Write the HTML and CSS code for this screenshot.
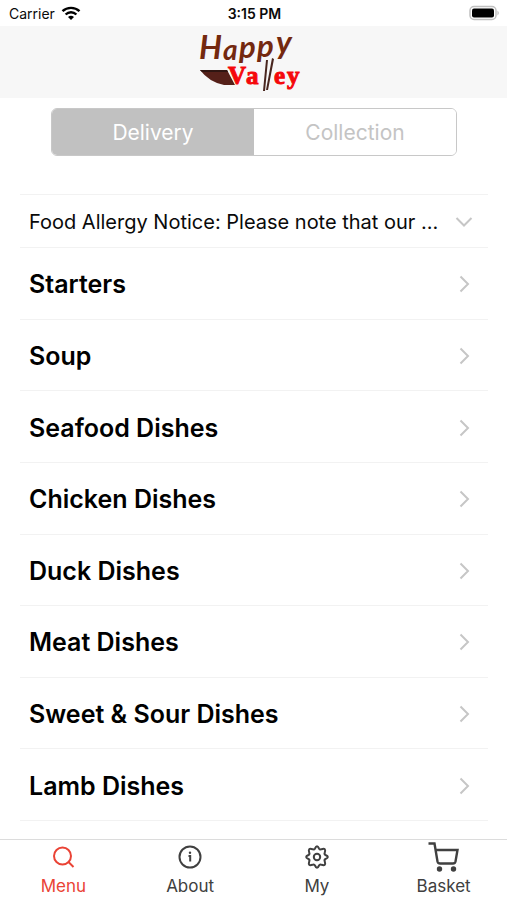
FILE: index.html
```html
<!DOCTYPE html>
<html lang="en">
<head>
<meta charset="utf-8">
<meta name="viewport" content="width=device-width, initial-scale=1">
<title>Happy Valley</title>
<link rel="stylesheet" href="styles.css">
</head>
<body>
<div class="status">
  <div class="carrier">Carrier
    <svg width="20" height="14" viewBox="0 0 20 14" fill="none" stroke="#000" stroke-width="2.4" aria-hidden="true"><path d="M1.5 5.2C6.2.7 13.800.7 18.500 5.200M4.600 8.500C7.700 5.500 12.300 5.500 15.400 8.500"/><path d="M7 11Q10 8.600 13 11L10 14Z" fill="#000" stroke="none"/></svg>
  </div>
  <div class="time">3:15 PM</div>
  <svg class="battery" width="31" height="16" viewBox="0 0 31 16" aria-hidden="true"><rect x="1" y="1.500" width="26" height="13" rx="4" fill="#fff" stroke="#c0c0c0" stroke-width="1.500"/><rect x="3" y="3.500" width="22" height="9" rx="2" fill="#000"/><path d="M28.500 5.500Q31 8 28.500 10.500Z" fill="#b5b5b5"/></svg>
</div>
<header class="brand">
  <svg class="logo" width="108" height="62" viewBox="0 0 108 62" role="img" aria-label="Happy Valley">
    <g class="happy"><text x="2" y="28" font-size="32">H</text><text x="26" y="29" font-size="28">a</text><text x="42" y="27" font-size="31">p</text><text x="60" y="26" font-size="31">p</text><text x="79" y="23" font-size="32">y</text></g>
    <path d="M3 39H30L38 54H27Q12 51 3 39Z" fill="#552019"/>
    <path d="M3 39H30L31 41H5Z" fill="#2f1511"/>
    <g class="valley"><text x="31" y="53">V</text><text x="49" y="53">a</text><text x="77" y="53">e</text><text x="90" y="53">y</text></g>
    <path d="M69 29L71 29 68 60 66 60ZM75 27L77 28 71 59 69 59Z" fill="#48261f"/>
  </svg>
</header>
<main>
  <div class="segments" role="group" aria-label="Order type">
    <button type="button" class="segment selected" aria-pressed="true">Delivery</button>
    <button type="button" class="segment" aria-pressed="false">Collection</button>
  </div>
  <button type="button" class="notice"><span class="notice-text">Food Allergy Notice: Please note that our ...</span>
    <svg class="chevron" width="20" height="20" viewBox="0 0 20 20" aria-hidden="true"><path d="M2.500 6L10 13.500 17.500 6"/></svg></button>
  <nav class="categories" aria-label="Menu categories">
    <a href="#starters">Starters<svg class="chevron" width="20" height="20" viewBox="0 0 20 20" aria-hidden="true"><path d="M6.500 2.500L14 10 6.500 17.500"/></svg></a>
    <a href="#soup">Soup<svg class="chevron" width="20" height="20" viewBox="0 0 20 20" aria-hidden="true"><path d="M6.500 2.500L14 10 6.500 17.500"/></svg></a>
    <a href="#seafood">Seafood Dishes<svg class="chevron" width="20" height="20" viewBox="0 0 20 20" aria-hidden="true"><path d="M6.500 2.500L14 10 6.500 17.500"/></svg></a>
    <a href="#chicken">Chicken Dishes<svg class="chevron" width="20" height="20" viewBox="0 0 20 20" aria-hidden="true"><path d="M6.500 2.500L14 10 6.500 17.500"/></svg></a>
    <a href="#duck">Duck Dishes<svg class="chevron" width="20" height="20" viewBox="0 0 20 20" aria-hidden="true"><path d="M6.500 2.500L14 10 6.500 17.500"/></svg></a>
    <a href="#meat">Meat Dishes<svg class="chevron" width="20" height="20" viewBox="0 0 20 20" aria-hidden="true"><path d="M6.500 2.500L14 10 6.500 17.500"/></svg></a>
    <a href="#sweet-sour">Sweet &amp; Sour Dishes<svg class="chevron" width="20" height="20" viewBox="0 0 20 20" aria-hidden="true"><path d="M6.500 2.500L14 10 6.500 17.500"/></svg></a>
    <a href="#lamb">Lamb Dishes<svg class="chevron" width="20" height="20" viewBox="0 0 20 20" aria-hidden="true"><path d="M6.500 2.500L14 10 6.500 17.500"/></svg></a>
  </nav>
</main>
<nav class="tabs" aria-label="Main">
  <a class="current" href="#menu" aria-current="page"><svg width="32" height="32" viewBox="0 0 32 32" aria-hidden="true"><circle cx="15.500" cy="15" r="8.500"/><path d="M21.500 21L26.500 26"/></svg>Menu</a>
  <a href="#about"><svg width="32" height="32" viewBox="0 0 32 32" aria-hidden="true"><circle cx="16" cy="16" r="10.500"/><path d="M14.500 15H16.200V20.500"/><circle class="solid" cx="16" cy="11.700" r="1.200"/></svg>About</a>
  <a href="#my"><svg width="32" height="32" viewBox="0 0 32 32" aria-hidden="true"><circle cx="16" cy="16" r="3.200"/><path d="M14 7.500Q16 2.800 18 7.500Q18.800 9 20.600 8.200Q25.300 6.700 23.800 11.400Q23 13.200 24.500 14Q29.200 16 24.500 18Q23 18.800 23.800 20.600Q25.300 25.300 20.600 23.800Q18.800 23 18 24.500Q16 29.200 14 24.500Q13.200 23 11.400 23.800Q6.700 25.300 8.200 20.600Q9 18.800 7.500 18Q2.800 16 7.500 14Q9 13.200 8.200 11.400Q6.700 6.700 11.400 8.200Q13.200 9 14 7.500Z"/></svg>My</a>
  <a href="#basket"><svg width="32" height="32" viewBox="0 0 32 32" aria-hidden="true"><path stroke-width="2.400" d="M.5 2.500H6.500L9.500 20.500Q10 22.500 12 22.500H25Q27 22.500 27.500 20.500L29.500 9H8"/><circle class="solid" cx="11.500" cy="28" r="2.700"/><circle class="solid" cx="25.500" cy="28" r="2.700"/></svg>Basket</a>
</nav>
</body>
</html>
```
FILE: styles.css
```css
* { box-sizing: border-box; }
body {
  margin: 0;
  min-height: 100vh;
  display: flex;
  flex-direction: column;
  background: #fff;
  color: #0a0a0a;
  font-family: Inter, "Liberation Sans", sans-serif;
}
svg { flex: none; display: block; }
a { color: inherit; text-decoration: none; }
button { font: inherit; color: inherit; cursor: pointer; }

.status {
  display: grid;
  grid-template-columns: 1fr auto 1fr;
  align-items: center;
  height: 26px;
  padding: 0 7px 0 9px;
  font-size: 14px;
}
.carrier { display: flex; align-items: center; gap: 6px; }
.time { font-weight: 600; }
.battery { justify-self: end; }

.brand {
  display: flex;
  justify-content: center;
  padding: 5px 0;
  background: #f7f7f7;
}
.logo { margin-right: 5px; overflow: visible; }
.happy { font-family: Lato, sans-serif; font-style: italic; font-weight: 700; fill: #74290f; }
.valley { font-family: "Liberation Serif", serif; font-weight: 700; font-size: 25px; fill: #f5080b; stroke: #f5080b; }

main {
  flex: 1;
  display: flex;
  flex-direction: column;
  padding: 10px 19px 18px 20px;
}
.segments {
  display: grid;
  grid-template-columns: 1fr 1fr;
  width: 100%;
  max-width: 406px;
  margin: 0 auto 38px;
  border: 1px solid #c8c8c8;
  border-radius: 6px;
  overflow: hidden;
}
.segment {
  height: 46px;
  padding: 0;
  border: 0;
  background: #fff;
  color: #c4c4c4;
  font-size: 21px;
}
.segment.selected { background: #c1c1c1; color: #fff; }

.notice, .categories a {
  display: flex;
  align-items: center;
  justify-content: space-between;
  padding: 2px 14px 0 9px;
  border: 0 solid #f2f2f2;
  border-bottom-width: 1px;
}
.notice {
  height: 54px;
  border-top-width: 1px;
  background: none;
  font-size: 20px;
  text-align: left;
}
.notice-text { overflow: hidden; white-space: nowrap; text-overflow: ellipsis; }
.chevron { fill: none; stroke: #c6c6c6; stroke-width: 2; }
.categories { flex: 1; display: grid; grid-auto-rows: 1fr; }
.categories a { min-height: 60px; font-size: 25px; font-weight: 600; color: #000; }

.tabs {
  position: sticky;
  bottom: 0;
  display: grid;
  grid-template-columns: repeat(4, 1fr);
  border-top: 1px solid #dcdcdc;
  background: #fff;
}
.tabs a {
  display: flex;
  flex-direction: column;
  align-items: center;
  padding-top: 1px;
  color: #404040;
  font-size: 17px;
  line-height: 27px;
}
.tabs svg { fill: none; stroke: currentColor; stroke-width: 2; }
.tabs .solid { fill: currentColor; stroke: none; }
.tabs .current { color: #ea4335; }
```
